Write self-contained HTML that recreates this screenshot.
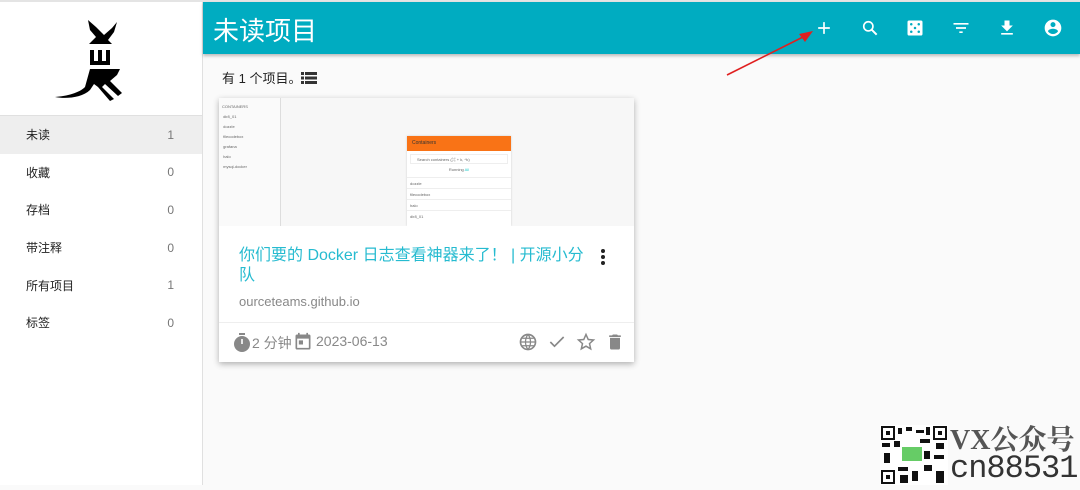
<!DOCTYPE html>
<html><head><meta charset="utf-8"><style>
*{margin:0;padding:0;box-sizing:border-box}
body{width:1080px;height:485px;overflow:hidden;background:#fafafa;font-family:"Liberation Sans","Noto Sans CJK SC",sans-serif;position:relative}
.top{position:absolute;left:0;top:0;width:1080px;height:2px;background:#e4e4e4}
.side{position:absolute;left:0;top:2px;width:203px;height:483px;background:#fff;border-right:1px solid #e0e0e0}
.logo{height:114px;border-bottom:1px solid #e0e0e0;position:relative}
.item{height:37.6px;display:flex;justify-content:space-between;align-items:center;padding:0 28px 0 26px;font-size:12px;color:#222}
.item span:last-child{color:#777}
.item.act{background:#eee}
.hdr{position:absolute;left:203px;top:2px;width:877px;height:52px;background:#00acc1;box-shadow:0 2px 3px rgba(0,0,0,.25)}
.hdr h1{position:absolute;left:10px;top:9px;font-size:26px;font-weight:400;color:#fff}
.ic{position:absolute;top:16px}
.cnt{position:absolute;left:222px;top:68px;font-size:13px;color:#222}
.card{position:absolute;left:219px;top:98px;width:415px;height:264px;background:#fff;box-shadow:0 2px 6px rgba(0,0,0,.3)}
.thumb{height:128px;background:#f7f7f7;position:relative;overflow:hidden;font-size:4px;color:#666}
.title{position:absolute;left:20px;top:148px;width:360px;font-size:16px;line-height:20px;color:#26bbd0}
.url{position:absolute;left:20px;top:196px;font-size:13px;color:#888}
.foot{position:absolute;left:0;top:224px;width:415px;height:40px;border-top:1px solid #eee;font-size:14px;color:#888}
</style></head><body>
<div class="top"></div>
<div class="side">
 <div class="logo">
  <svg width="220" height="113" viewBox="0 0 220 113" style="position:absolute;left:0;top:0">
   <path d="M88 18 L96 25 L104 33 L112 26 L117 20 L114 30 L108 38 L112 42 L89 42 L96 35 L90 28Z" fill="#000"/>
   <path d="M90 48 h4 v11 h4 v-11 h4 v11 h4 v-11 h4 v15 h-20Z" fill="#000"/>
   <path d="M90 67 h30 l-3 6 -7 6 12 12 -4 3 -13 -12 -3 3 12 12 -4 2 -12 -14 -4 -3 -4 6 c-8 8 -25 9 -35 7 c12 -1 24 -4 30 -10Z" fill="#000"/>
  </svg>
 </div>
 <div class="item act"><span>未读</span><span>1</span></div>
 <div class="item"><span>收藏</span><span>0</span></div>
 <div class="item"><span>存档</span><span>0</span></div>
 <div class="item"><span>带注释</span><span>0</span></div>
 <div class="item"><span>所有项目</span><span>1</span></div>
 <div class="item"><span>标签</span><span>0</span></div>
</div>
<div class="hdr"><h1>未读项目</h1>
 <svg class="ic" style="left:611px" width="20" height="20" viewBox="0 0 24 24"><path d="M12 5v14M5 12h14" stroke="#fff" stroke-width="2"/></svg>
 <svg class="ic" style="left:657px" width="20" height="20" viewBox="0 0 24 24"><circle cx="10" cy="10" r="5.5" stroke="#fff" stroke-width="2" fill="none"/><path d="M14 14l6 6" stroke="#fff" stroke-width="2.4"/></svg>
 <svg class="ic" style="left:702px" width="20" height="20" viewBox="0 0 24 24"><rect x="3" y="3" width="18" height="18" rx="2" fill="#fff"/><g fill="#00acc1"><circle cx="7.5" cy="7.5" r="1.5"/><circle cx="16.5" cy="7.5" r="1.5"/><circle cx="12" cy="12" r="1.5"/><circle cx="7.5" cy="16.5" r="1.5"/><circle cx="16.5" cy="16.5" r="1.5"/></g></svg>
 <svg class="ic" style="left:748px" width="20" height="20" viewBox="0 0 24 24"><path d="M3 7h18M6 12h12M10 17h4" stroke="#fff" stroke-width="2"/></svg>
 <svg class="ic" style="left:794px" width="20" height="20" viewBox="0 0 24 24"><path d="M19 9h-4V3H9v6H5l7 7zM5 18v2h14v-2z" fill="#fff"/></svg>
 <svg class="ic" style="left:840px" width="20" height="20" viewBox="0 0 24 24"><path d="M12 2C6.5 2 2 6.5 2 12s4.5 10 10 10 10-4.5 10-10S17.5 2 12 2zm0 3a3 3 0 110 6 3 3 0 010-6zm0 14.2c-2.5 0-4.7-1.3-6-3.2 0-2 4-3.1 6-3.1s6 1.1 6 3.1c-1.3 1.9-3.5 3.2-6 3.2z" fill="#fff"/></svg>
</div>
<svg style="position:absolute;left:725px;top:28px" width="90" height="50"><path d="M2 47 L80 8" stroke="#e02020" stroke-width="1.6"/><path d="M88 3 L74 6 L80 14Z" fill="#e02020"/></svg>
<div class="cnt">有 1 个项目。<svg width="16" height="12" viewBox="0 0 16 12" style="vertical-align:-1px"><path d="M0 0h3v3H0zM4 0h12v3H4zM0 4.5h3v3H0zM4 4.5h12v3H4zM0 9h3v3H0zM4 9h12v3H4z" fill="#333"/></svg></div>
<div class="card">
 <div class="thumb">
  <div style="position:absolute;left:0;top:0;width:62px;height:128px;border-right:1px solid #ddd;background:#fafafa;padding:4px 0 0 3px;line-height:10px">CONTAINERS<br>&nbsp;dir8_01<br>&nbsp;dozzle<br>&nbsp;filecodebox<br>&nbsp;grafana<br>&nbsp;halo<br>&nbsp;mysql-docker</div>
  <div style="position:absolute;left:188px;top:38px;width:104px;height:90px;background:#fff;box-shadow:0 0 2px #ccc">
   <div style="height:15px;background:#f97316;color:#333;font-size:5px;padding:4px 5px">Containers</div>
   <div style="margin:3px;height:10px;border:1px solid #eee;font-size:4px;padding:2px 6px">Search containers (⌘ + k, ^k)</div>
   <div style="text-align:center;height:10px">Running <span style="color:#2cc">All</span></div>
   <div style="border-top:1px solid #eee;height:11px;padding:3px">dozzle</div>
   <div style="border-top:1px solid #eee;height:11px;padding:3px">filecodebox</div>
   <div style="border-top:1px solid #eee;height:11px;padding:3px">halo</div>
   <div style="border-top:1px solid #eee;height:11px;padding:3px">dir8_01</div>
  </div>
 </div>
 <div class="title">你们要的 Docker 日志查看神器来了！ | 开源小分队</div>
 <svg style="position:absolute;left:380px;top:150px" width="8" height="18"><circle cx="4" cy="3" r="2" fill="#222"/><circle cx="4" cy="9" r="2" fill="#222"/><circle cx="4" cy="15" r="2" fill="#222"/></svg>
 <div class="url">ourceteams.github.io</div>
 <div class="foot">
  <svg style="position:absolute;left:14px;top:10px" width="18" height="20" viewBox="0 0 18 20"><rect x="6" y="0" width="6" height="2" fill="#888"/><circle cx="9" cy="11" r="8" fill="#888"/><path d="M9 11V6" stroke="#fff" stroke-width="1.6"/></svg>
  <span style="position:absolute;left:33px;top:10px">2 分钟</span>
  <svg style="position:absolute;left:74px;top:9px" width="20" height="20" viewBox="0 0 24 24"><path d="M19 3h-1V1h-2v2H8V1H6v2H5a2 2 0 00-2 2v14a2 2 0 002 2h14a2 2 0 002-2V5a2 2 0 00-2-2zm0 16H5V8h14zM7 10h5v5H7z" fill="#888"/></svg>
  <span style="position:absolute;left:97px;top:10px">2023-06-13</span>
  <svg style="position:absolute;left:299px;top:9px" width="20" height="20" viewBox="0 0 24 24"><circle cx="12" cy="12" r="9" fill="none" stroke="#888" stroke-width="2"/><path d="M3 12h18M12 3c-4 5-4 13 0 18M12 3c4 5 4 13 0 18M5 7.5h14M5 16.5h14" fill="none" stroke="#888" stroke-width="1.5"/></svg>
  <svg style="position:absolute;left:328px;top:9px" width="20" height="20" viewBox="0 0 24 24"><path d="M4 12l5 5L20 6" fill="none" stroke="#888" stroke-width="2"/></svg>
  <svg style="position:absolute;left:357px;top:9px" width="20" height="20" viewBox="0 0 24 24"><path d="M12 3l2.7 6 6.3.6-4.8 4.3 1.4 6.3L12 17l-5.6 3.2 1.4-6.3L3 9.6 9.3 9z" fill="none" stroke="#888" stroke-width="1.8"/></svg>
  <svg style="position:absolute;left:386px;top:9px" width="20" height="20" viewBox="0 0 24 24"><path d="M6 19a2 2 0 002 2h8a2 2 0 002-2V7H6zM19 4h-3.5l-1-1h-5l-1 1H5v2h14z" fill="#888"/></svg>
 </div>
</div>
<div style="position:absolute;left:880px;top:425px;width:68px;height:60px;background:#fff">
 <svg width="68" height="60" viewBox="0 0 68 60">
  <g fill="none" stroke="#111" stroke-width="2"><rect x="2" y="2" width="12" height="12"/><rect x="54" y="2" width="12" height="12"/><rect x="2" y="46" width="12" height="12"/></g>
  <g fill="#111"><rect x="6" y="6" width="4" height="4"/><rect x="58" y="6" width="4" height="4"/><rect x="6" y="50" width="4" height="4"/>
  <rect x="18" y="3" width="4" height="6"/><rect x="26" y="2" width="6" height="4"/><rect x="36" y="5" width="8" height="3"/><rect x="46" y="2" width="4" height="8"/>
  <rect x="2" y="18" width="8" height="4"/><rect x="14" y="16" width="6" height="6"/><rect x="40" y="14" width="10" height="4"/><rect x="56" y="18" width="8" height="6"/>
  <rect x="4" y="28" width="6" height="10"/><rect x="44" y="26" width="6" height="8"/><rect x="54" y="30" width="10" height="4"/>
  <rect x="18" y="42" width="10" height="4"/><rect x="32" y="46" width="6" height="10"/><rect x="44" y="40" width="8" height="6"/><rect x="56" y="46" width="8" height="12"/><rect x="20" y="50" width="8" height="8"/></g>
  <rect x="22" y="22" width="20" height="14" fill="#6c6"/>
 </svg>
</div>
<div style="position:absolute;left:950px;top:425px;font-family:'Liberation Serif','Noto Serif CJK SC',serif;font-size:28px;color:#555;font-weight:bold;line-height:32px">VX公众号</div>
<div style="position:absolute;left:950px;top:452px;font-family:'Liberation Mono',monospace;font-size:32px;color:#333;letter-spacing:-1px;line-height:34px">cn88531</div>
</body></html>
